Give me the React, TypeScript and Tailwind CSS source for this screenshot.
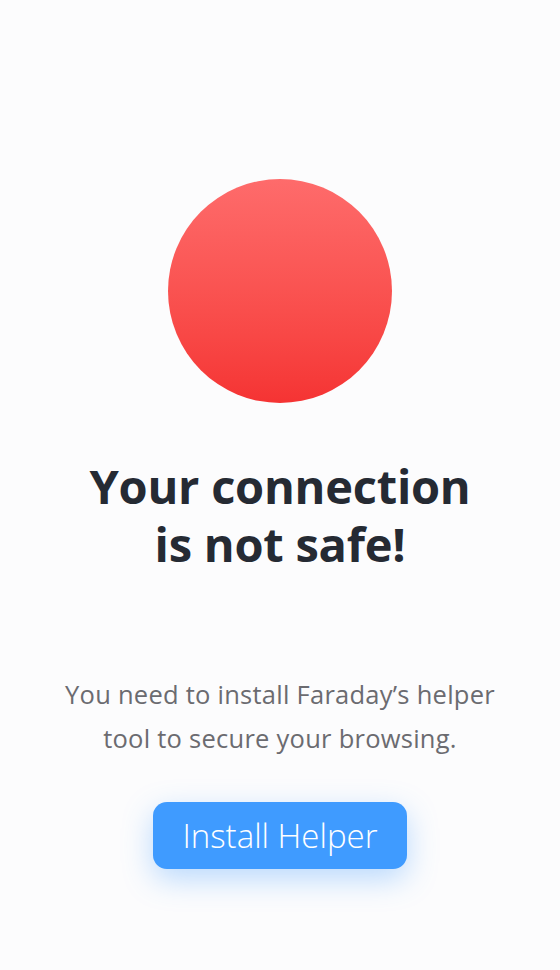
export default function App() {
  return (
    <div
      className="flex min-h-[970px] w-full flex-col items-center bg-[#fcfcfd]"
      style={{ fontFamily: '"Open Sans", Lato, sans-serif' }}
    >
      <div className="mt-[179px] h-[224px] w-[224px] rounded-full bg-gradient-to-b from-[#fe6b6b] to-[#f53333]" />

      <h1 className="mt-[54px] text-center text-[47px] leading-[58px] font-bold tracking-[-0.005em] text-[#252a33]">
        Your connection
        <br />
        is not safe!
      </h1>

      <p className="mt-[99px] text-center text-[25.5px] leading-[44px] tracking-[0.01em] text-[#6b6b70]">
        You need to install Faraday’s helper
        <br />
        tool to secure your browsing.
      </p>

      <button
        type="button"
        className="mt-[42px] flex h-[67px] w-[254px] items-center justify-center rounded-[14px] bg-[#3f9bff] text-[33px] font-light text-white shadow-[0_10px_30px_rgba(63,155,255,0.35)]"
      >
        Install Helper
      </button>
    </div>
  )
}
